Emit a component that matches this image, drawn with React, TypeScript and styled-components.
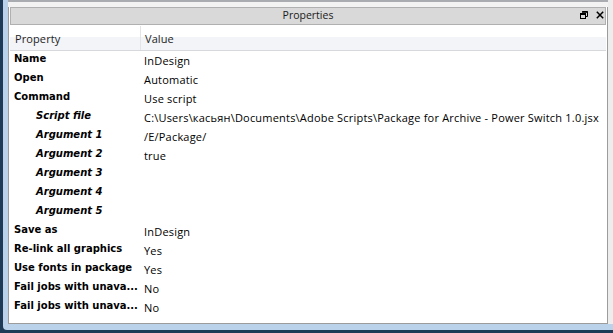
import React from "react";
import styled, { createGlobalStyle } from "styled-components";

const GlobalStyle = createGlobalStyle`
  html, body { margin: 0; padding: 0; background: #1d3a57; overflow: hidden; }
  * { box-sizing: border-box; }
`;

const Screen = styled.div`
  width: 613px;
  height: 333px;
  display: flex;
  background: #1d3a57;
  padding: 0 0 3px 3px;
`;

const WindowFrame = styled.div`
  flex: 1;
  display: flex;
  background: #bad2ea;
  padding: 0 0 6px 5px;
  border-bottom-left-radius: 4px;
`;

const Dock = styled.div`
  flex: 1;
  display: flex;
  flex-direction: column;
  background: #ededed;
  padding-right: 5px;
`;

const TopStrip = styled.div`
  height: 7px;
  background: #f3f3f3;
  border-top: 2px solid #a9acb0;
`;

const Panel = styled.div`
  flex: 1;
  display: flex;
  flex-direction: column;
  background: #ffffff;
  border: 1px solid #9c9c9c;
  border-top: none;
  padding: 0 1px;
`;

const TitleBar = styled.div`
  height: 18px;
  display: flex;
  align-items: center;
  position: relative;
  background: #d9d9d9;
  border: 1px solid #b0b0b0;
`;

const Title = styled.div`
  flex: 1;
  text-align: center;
  font-family: "Open Sans", "Noto Sans", sans-serif;
  font-size: 10.5px;
  line-height: 14px;
  margin-top: -2px;
  color: #1a1a1a;
`;

const TitleButtons = styled.div`
  position: absolute;
  right: 1px;
  top: 3px;
  display: flex;
  align-items: center;
  gap: 8px;
`;

const Header = styled.div`
  height: 25px;
  display: grid;
  grid-template-columns: 130px 1fr;
  background: linear-gradient(#ffffff 0, #ffffff 45%, #f2f4f7 46%, #f2f4f7 100%);
  border-bottom: 1px solid #d6d8db;
  margin-top: 1px;
`;

const HeaderCell = styled.div<{ $divider?: boolean }>`
  font-family: "Open Sans", "Noto Sans", sans-serif;
  font-size: 11px;
  letter-spacing: 0.1px;
  color: #1e1e1e;
  padding: 5px 0 0 ${(p) => (p.$divider ? "4px" : "5px")};
  border-left: ${(p) => (p.$divider ? "1px solid #e2e4e8" : "none")};
  white-space: nowrap;
`;

const Rows = styled.div`
  display: flex;
  flex-direction: column;
`;

const Row = styled.div`
  height: 19px;
  display: grid;
  grid-template-columns: 134px 1fr;
`;

const Label = styled.div<{ $sub?: boolean }>`
  font-family: "DejaVu Sans", "Verdana", sans-serif;
  font-weight: bold;
  font-style: ${(p) => (p.$sub ? "italic" : "normal")};
  font-size: 10px;
  line-height: 13px;
  padding: 1px 0 0 ${(p) => (p.$sub ? "26px" : "4px")};
  color: #000;
  white-space: nowrap;
  overflow: hidden;
`;

const Value = styled.div`
  font-family: "Open Sans", "Noto Sans", sans-serif;
  font-size: 11px;
  letter-spacing: 0.2px;
  line-height: 15px;
  padding-top: 2px;
  color: #000;
  white-space: nowrap;
`;

const RestoreIcon = () => (
  <svg width="8" height="8" viewBox="0 0 8 8">
    <path d="M2.5 0.5h5v5h-2" fill="none" stroke="#000" strokeWidth="1" />
    <path d="M2 1h5.5" stroke="#000" strokeWidth="1.6" />
    <rect x="0.5" y="2.5" width="5" height="5" fill="none" stroke="#000" strokeWidth="1" />
    <path d="M0 3.2h6" stroke="#000" strokeWidth="1.6" />
  </svg>
);

const CloseIcon = () => (
  <svg width="8" height="8" viewBox="0 0 8 8">
    <path d="M0.8 0.8L7.2 7.2M7.2 0.8L0.8 7.2" stroke="#000" strokeWidth="1.5" />
  </svg>
);

type Item = { label: string; value: string; sub?: boolean };

const items: Item[] = [
  { label: "Name", value: "InDesign" },
  { label: "Open", value: "Automatic" },
  { label: "Command", value: "Use script" },
  {
    label: "Script file",
    value:
      "C:\\Users\\касьян\\Documents\\Adobe Scripts\\Package for Archive - Power Switch 1.0.jsx",
    sub: true,
  },
  { label: "Argument 1", value: "/E/Package/", sub: true },
  { label: "Argument 2", value: "true", sub: true },
  { label: "Argument 3", value: "", sub: true },
  { label: "Argument 4", value: "", sub: true },
  { label: "Argument 5", value: "", sub: true },
  { label: "Save as", value: "InDesign" },
  { label: "Re-link all graphics", value: "Yes" },
  { label: "Use fonts in package", value: "Yes" },
  { label: "Fail jobs with unava...", value: "No" },
  { label: "Fail jobs with unava...", value: "No" },
];

export default function App() {
  return (
    <>
      <GlobalStyle />
      <Screen>
        <WindowFrame>
          <Dock>
            <TopStrip />
            <Panel>
              <TitleBar>
                <Title>Properties</Title>
                <TitleButtons>
                  <RestoreIcon />
                  <CloseIcon />
                </TitleButtons>
              </TitleBar>
              <Header>
                <HeaderCell>Property</HeaderCell>
                <HeaderCell $divider>Value</HeaderCell>
              </Header>
              <Rows>
                {items.map((it, i) => (
                  <Row key={i}>
                    <Label $sub={it.sub}>{it.label}</Label>
                    <Value>{it.value}</Value>
                  </Row>
                ))}
              </Rows>
            </Panel>
          </Dock>
        </WindowFrame>
      </Screen>
    </>
  );
}
